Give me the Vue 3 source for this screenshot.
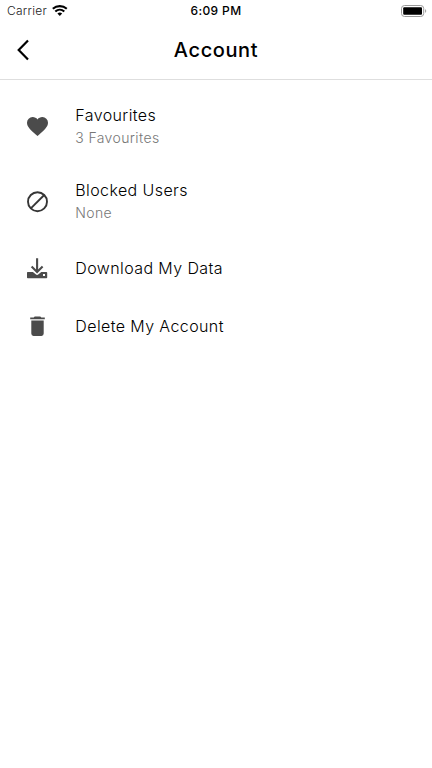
<script setup>
const items = [
  { icon: 'heart', title: 'Favourites', note: '3 Favourites' },
  { icon: 'block', title: 'Blocked Users', note: 'None' },
  { icon: 'download', title: 'Download My Data' },
  { icon: 'trash', title: 'Delete My Account' },
]
</script>

<template>
  <div class="screen">
    <div class="status">
      <div class="carrier">
        <span>Carrier</span>
        <svg class="wifi" width="16" height="12" viewBox="0 0 16 12" fill="none" stroke="#000" stroke-width="2.1">
          <path d="M.8 3.7C4.8.2 10.8.2 14.8 3.7" />
          <path d="M3.3 6.6C6 4.1 9.6 4.1 12.3 6.6" />
          <path d="M5.4 8.6Q7.8 6.6 10.2 8.6L7.8 11Z" fill="#000" stroke="none" />
        </svg>
      </div>
      <span class="time">6:09 PM</span>
      <svg class="battery" width="27" height="13" viewBox="0 0 27 13">
        <rect x="1.5" y=".5" width="22.2" height="11" rx="3" fill="none" stroke="#999" />
        <rect x="3.2" y="2.2" width="18.8" height="7.5" rx="1" fill="#000" />
        <path d="M25.1 4.1Q27.4 6 25.1 7.9Z" fill="#999" />
      </svg>
    </div>
    <header class="nav">
      <svg class="back" width="14" height="22" viewBox="0 0 14 22" fill="none" stroke="#000" stroke-width="2.2">
        <path d="M12 1.6 2.7 11 12 20.4" />
      </svg>
      <h1>Account</h1>
    </header>
    <main class="list">
      <div v-for="item in items" :key="item.title" class="row" :class="{ tall: item.note }">
        <svg class="icon" width="24" height="24" viewBox="-0.5 0 24 24">
          <path v-if="item.icon === 'heart'" fill="#4b4b4b" d="M12 21.1 10.5 19.7C5.2 14.9 1.5 11.7 1.5 7.7A5.6 5.6 0 0 1 7.2 2.1C9.1 2.1 10.9 3 12 4.4 13.1 3 14.9 2.1 16.8 2.1A5.6 5.6 0 0 1 22.5 7.7C22.5 11.7 18.8 14.9 13.5 19.7Z" />
          <g v-else-if="item.icon === 'block'" fill="none" stroke="#363636" stroke-width="1.9">
            <circle cx="12" cy="11.7" r="9.5" />
            <path d="M5.3 18.4 18.7 5" />
          </g>
          <g v-else-if="item.icon === 'download'">
            <path fill="#4b4b4b" fill-rule="evenodd" d="M2.1 16H7.4L10.2 18.3Q11.6 19.5 13 18.3L15.8 16H20.9Q21.7 16 21.7 16.8V21.4Q21.7 22.2 20.9 22.2H2.3Q1.5 22.2 1.5 21.4V16.8Q1.5 16 2.1 16ZM17.5 18V20H19.5V18Z" />
            <path d="M11.6 2.3V15.5M6.1 10.4 11.6 15.9 17.1 10.4" fill="none" stroke="#4b4b4b" stroke-width="2.1" />
          </g>
          <path v-else fill="#4b4b4b" d="M4.7 3.5H8.2L9.2 2.5H14.8L15.8 3.5H19.3V5.3H4.7ZM5.8 6.6H18.2V19.6Q18.2 22 16 22H8Q5.8 22 5.8 19.6Z" />
        </svg>
        <div class="text">
          <div class="title">{{ item.title }}</div>
          <div v-if="item.note" class="note">{{ item.note }}</div>
        </div>
      </div>
    </main>
  </div>
</template>

<style>
body {
  background: #fff;
}
</style>

<style scoped>
.screen {
  height: 768px;
  background: #fff;
  color: #000;
  font-family: Inter, "Liberation Sans", sans-serif;
}
.status {
  display: grid;
  grid-template-columns: 1fr auto 1fr;
  align-items: center;
  height: 22px;
  padding: 0 5px 0 7px;
  font-size: 12px;
  line-height: 22px;
}
.carrier {
  display: flex;
  align-items: center;
  gap: 5px;
  color: #222;
  font-weight: 300;
  letter-spacing: 0.25px;
}
.time {
  margin-right: 2px;
  color: #000;
  font-weight: 500;
  letter-spacing: 0.4px;
}
.battery {
  justify-self: end;
}
.nav {
  display: grid;
  grid-template-columns: 40px 1fr 40px;
  align-items: center;
  box-sizing: border-box;
  height: 58px;
  padding-bottom: 1px;
  border-bottom: 1px solid #dedede;
}
.back {
  margin-left: 16px;
}
h1 {
  margin: 0;
  color: #000;
  font-size: 20px;
  font-weight: 500;
  line-height: 24px;
  letter-spacing: 0.6px;
  text-align: center;
}
.list {
  padding-top: 9px;
}
.row {
  display: flex;
  align-items: center;
  gap: 26px;
  height: 58px;
  padding: 0 25.5px;
}
.icon {
  margin: 0 0.3px 0 -0.5px;
}
.row.tall {
  height: 75px;
}
.title {
  font-size: 16px;
  font-weight: 300;
  line-height: 23px;
  letter-spacing: 0.4px;
}
.note {
  color: #777;
  font-size: 14px;
  font-weight: 300;
  line-height: 22px;
  letter-spacing: 0.38px;
}
</style>
